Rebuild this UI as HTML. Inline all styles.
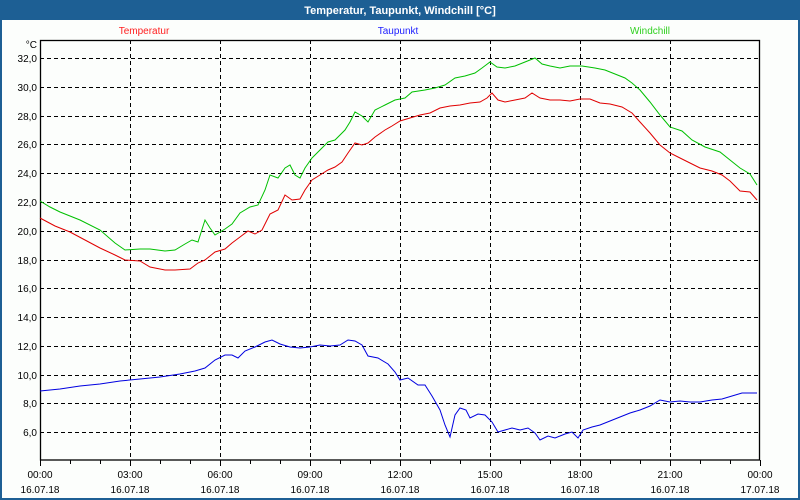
<!DOCTYPE html>
<html><head><meta charset="utf-8"><style>
html,body{margin:0;padding:0;width:800px;height:500px;overflow:hidden;background:#1d5f94;}
svg{display:block;font-family:"Liberation Sans",sans-serif;}
</style></head><body>
<svg width="800" height="500" viewBox="0 0 800 500" xmlns="http://www.w3.org/2000/svg">
<rect x="0" y="0" width="800" height="500" fill="#1d5f94"/>
<rect x="2" y="20" width="796" height="478" fill="#fcfefc"/>
<text x="400" y="14" fill="#fff" font-size="11" font-weight="bold" text-anchor="middle">Temperatur, Taupunkt, Windchill [°C]</text>
<text x="144" y="34" fill="#ff2020" font-size="10" text-anchor="middle">Temperatur</text>
<text x="398" y="34" fill="#2020ff" font-size="10" text-anchor="middle">Taupunkt</text>
<text x="650" y="34" fill="#30d020" font-size="10" text-anchor="middle">Windchill</text>
<g stroke="#000" stroke-width="1" stroke-dasharray="4,3" fill="none">
<path d="M40 58.5H760M40 87.5H760M40 116.5H760M40 144.5H760M40 173.5H760M40 202.5H760M40 231.5H760M40 260.5H760M40 288.5H760M40 317.5H760M40 346.5H760M40 375.5H760M40 403.5H760M40 432.5H760"/>
<path d="M130.5 40V460M220.5 40V460M310.5 40V460M400.5 40V460M490.5 40V460M580.5 40V460M670.5 40V460"/>
</g>
<rect x="40.5" y="40.5" width="719" height="419.5" fill="none" stroke="#000" stroke-width="1.3"/>
<path d="M40.5 460V466M70.5 460V464M100.5 460V464M130.5 460V466M160.5 460V464M190.5 460V464M220.5 460V466M250.5 460V464M280.5 460V464M310.5 460V466M340.5 460V464M370.5 460V464M400.5 460V466M430.5 460V464M460.5 460V464M490.5 460V466M520.5 460V464M550.5 460V464M580.5 460V466M610.5 460V464M640.5 460V464M670.5 460V466M700.5 460V464M730.5 460V464M760.5 460V466" stroke="#000"/>
<g font-size="10" fill="#000" text-anchor="end">
<text x="37" y="48">°C</text>
<text x="37" y="62">32,0</text><text x="37" y="91">30,0</text><text x="37" y="120">28,0</text><text x="37" y="148">26,0</text><text x="37" y="177">24,0</text><text x="37" y="206">22,0</text><text x="37" y="235">20,0</text><text x="37" y="264">18,0</text><text x="37" y="292">16,0</text><text x="37" y="321">14,0</text><text x="37" y="350">12,0</text><text x="37" y="379">10,0</text><text x="37" y="407">8,0</text><text x="37" y="436">6,0</text>
</g>
<g font-size="10" fill="#000" text-anchor="middle">
<text x="40" y="478">00:00</text><text x="130" y="478">03:00</text><text x="220" y="478">06:00</text><text x="310" y="478">09:00</text><text x="400" y="478">12:00</text><text x="490" y="478">15:00</text><text x="580" y="478">18:00</text><text x="670" y="478">21:00</text><text x="760" y="478">00:00</text>
<text x="40" y="493">16.07.18</text><text x="130" y="493">16.07.18</text><text x="220" y="493">16.07.18</text><text x="310" y="493">16.07.18</text><text x="400" y="493">16.07.18</text><text x="490" y="493">16.07.18</text><text x="580" y="493">16.07.18</text><text x="670" y="493">16.07.18</text><text x="760" y="493">17.07.18</text>
</g>
<g fill="none" stroke-width="1">
<polyline stroke="#00c000" points="40,201 50,207 60,212 80,220 100,230 115,243 125,250 140,249 150,249 165,251 175,250 185,244 192,240 198,242 205,220 210,228 215,235 225,229 232,224 240,213 250,207 258,205 265,190 270,175 278,178 285,168 290,165 295,175 300,178 305,168 312,158 320,150 328,142 335,140 345,130 350,122 355,112 362,116 368,122 375,110 385,105 395,100 405,98 412,92 425,90 435,88 445,85 455,78 465,76 475,73 482,68 490,62 497,67 505,68 515,66 525,62 535,58 542,64 550,66 560,68 570,66 582,66 595,68 605,70 615,74 625,78 632,83 640,90 650,102 660,115 670,127 682,131 692,140 705,147 720,152 730,160 740,168 750,174 757,185"/>
<polyline stroke="#e00000" points="40,218 55,226 70,232 85,240 100,248 115,255 125,260 140,261 150,267 165,270 175,270 190,269 198,263 205,260 215,252 225,249 232,243 240,237 248,231 255,234 262,230 270,214 278,210 285,195 292,200 300,199 305,190 312,180 320,175 328,170 335,167 342,162 348,153 355,143 362,145 368,143 375,137 385,130 392,126 400,121 410,118 420,115 430,113 440,108 450,106 460,105 470,103 480,102 487,98 492,93 498,100 505,102 515,100 525,98 532,93 540,98 550,100 560,100 570,101 580,99 590,99 600,103 610,104 622,107 632,113 640,122 650,133 660,145 670,153 680,158 690,163 700,168 712,171 722,175 730,181 740,191 750,192 757,200"/>
<polyline stroke="#0000e0" points="40,391 60,389 80,386 100,384 120,381 140,379 160,377 180,374 195,371 205,368 215,360 225,355 232,355 238,358 245,351 255,347 265,342 272,340 280,344 290,347 300,348 310,347 320,345 330,346 340,345 348,340 355,341 362,345 368,356 378,358 388,364 395,372 400,380 408,378 418,385 425,385 432,396 440,410 445,425 450,437 455,415 460,408 466,410 470,418 478,414 485,415 492,422 498,432 505,430 512,428 520,430 528,428 535,433 540,440 548,436 555,438 565,434 572,432 578,438 583,430 592,427 600,425 610,421 620,417 630,413 640,410 650,406 660,400 670,402 680,401 690,402 700,402 712,400 722,399 732,396 742,393 750,393 757,393"/>
</g>
</svg>
</body></html>
